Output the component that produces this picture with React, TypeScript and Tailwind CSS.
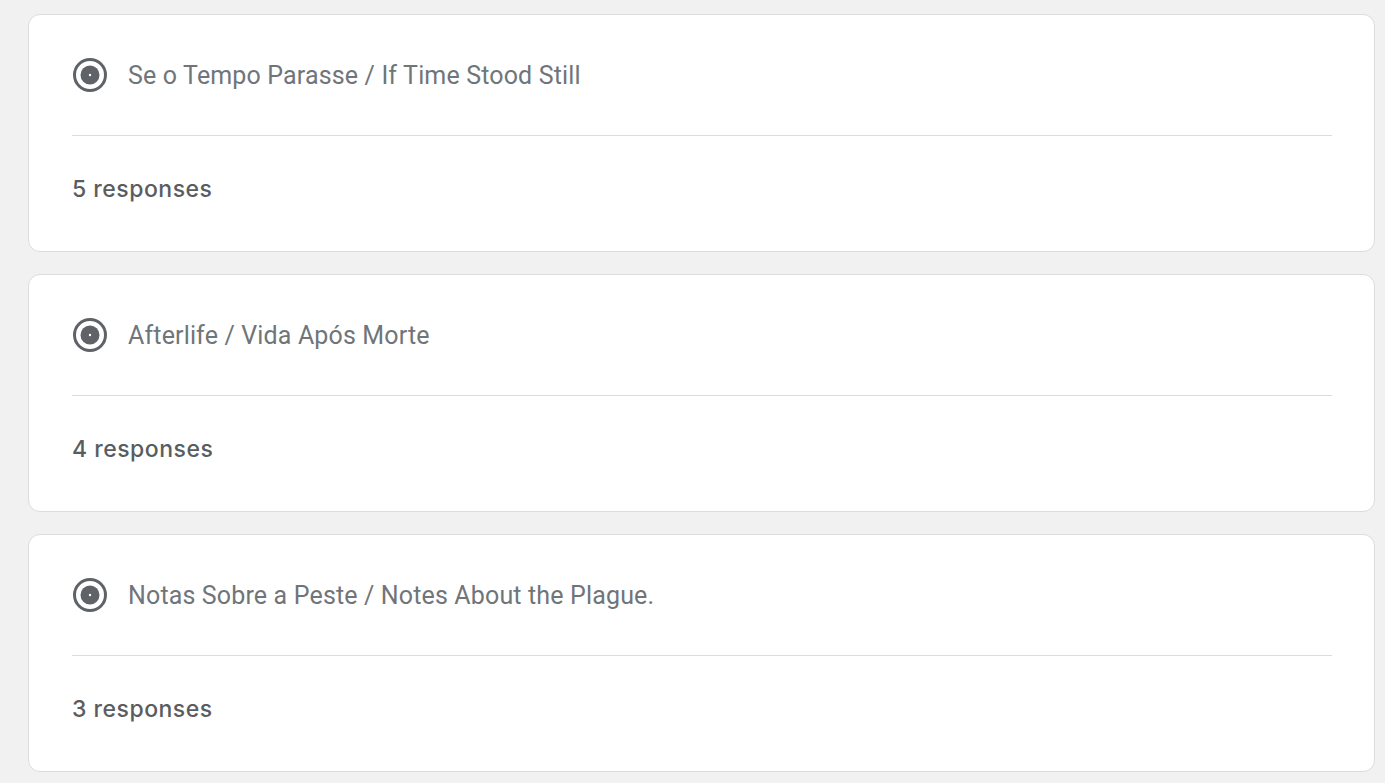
const questions = [
  { title: 'Se o Tempo Parasse / If Time Stood Still', count: 5 },
  { title: 'Afterlife / Vida Após Morte', count: 4 },
  { title: 'Notas Sobre a Peste / Notes About the Plague.', count: 3 },
]

function RadioIcon() {
  return (
    <svg width="36" height="36" viewBox="0 0 36 36" className="shrink-0">
      <circle cx="18" cy="18" r="15.5" fill="none" stroke="#5f6368" strokeWidth="3" />
      <circle cx="18" cy="18" r="9.5" fill="#5f6368" />
      <circle cx="18" cy="18" r="1.2" fill="#ffffff" />
    </svg>
  )
}

export default function App() {
  return (
    <div className="min-h-screen bg-[#f1f1f1] pl-[28px] pr-[10px] pt-[14px] font-['Roboto',sans-serif]">
      <div className="flex flex-col gap-[22px]">
        {questions.map(q => (
          <div key={q.title} className="h-[238px] rounded-[12px] border border-[#dadce0] bg-white pl-[43px] pr-[42px]">
            <div className="flex h-[121px] items-center gap-[20px] border-b border-[#dadce0]">
              <RadioIcon />
              <span className="text-[25px] leading-none tracking-[0.15px] text-[#70757a]">{q.title}</span>
            </div>
            <div className="flex h-[107px] items-center font-['Inter',sans-serif] text-[23px] font-medium tracking-[0.5px] text-[#595d62]">
              {q.count} responses
            </div>
          </div>
        ))}
      </div>
    </div>
  )
}
